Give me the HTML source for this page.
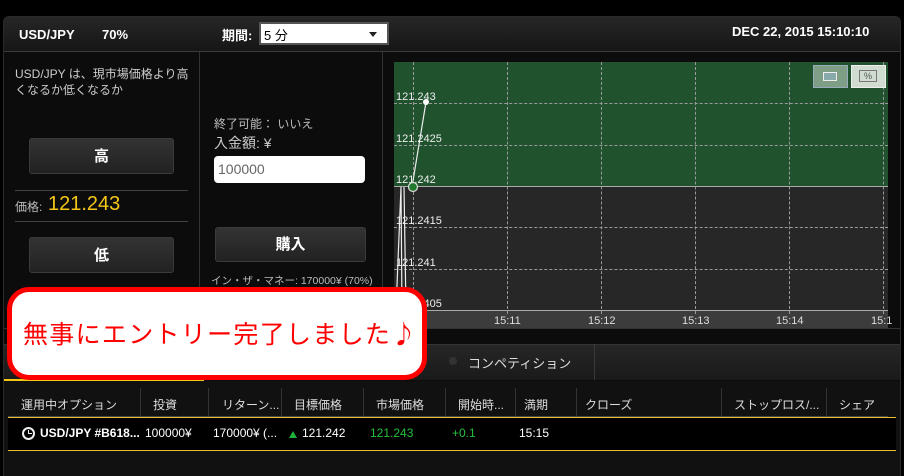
<!DOCTYPE html>
<html><head><meta charset="utf-8"><style>
*{margin:0;padding:0;box-sizing:border-box}
body{width:904px;height:476px;background:#000;position:relative;overflow:hidden;font-family:"Liberation Sans","Noto Sans CJK JP",sans-serif;color:#ddd}
.a{position:absolute}
.panel{left:3px;top:16px;width:898px;height:460px;background:#0c0c0c;border-radius:6px 6px 0 0;border:1px solid #2a2a2a}
.hdr{left:4px;top:17px;width:896px;height:35px;background:linear-gradient(#262626,#161616);border-bottom:1px solid #3a3a3a;border-radius:5px 5px 0 0}
.b{font-weight:bold;color:#fff;font-size:13px}
.btn{background:linear-gradient(#333,#222);border:1px solid #3a3a3a;border-radius:3px;color:#fff;font-weight:bold;font-size:15px;text-align:center}
.t{font-size:12px;color:#ddd}
.vl{width:1px;border-left:1px dashed #9a9a9a}
.hl{height:1px;border-top:1px dashed #9a9a9a}
.yl{font-size:11px;color:#eee}
</style></head><body>
<div class="a panel"></div>
<div class="a hdr"></div>
<div class="a b" style="left:19px;top:27px">USD/JPY</div>
<div class="a b" style="left:102px;top:27px">70%</div>
<div class="a b" style="left:222px;top:25px">期間:</div>
<div class="a" style="left:259px;top:22px;width:130px;height:23px;background:#fff;border:2px solid #555"></div>
<div class="a" style="left:264px;top:25px;font-size:13px;color:#000">5 分</div>
<div class="a" style="left:369px;top:32px;border-left:4px solid transparent;border-right:4px solid transparent;border-top:5px solid #222"></div>
<div class="a b" style="left:732px;top:24px">DEC 22, 2015 15:10:10</div>
<div class="a" style="left:199px;top:52px;width:1px;height:276px;background:#333"></div>
<div class="a" style="left:382px;top:52px;width:1px;height:276px;background:#333"></div>
<div class="a" style="left:4px;top:328px;width:896px;height:1px;background:#333"></div>
<div class="a t" style="left:15px;top:66px;line-height:16px;width:178px;font-size:12px;color:#ccc">USD/JPY は、現市場価格より高くなるか低くなるか</div>
<div class="a btn" style="left:29px;top:138px;width:145px;height:36px;line-height:35px">高</div>
<div class="a" style="left:15px;top:190px;width:173px;height:1px;background:#444"></div>
<div class="a t" style="left:15px;top:198px;color:#bbb">価格:</div>
<div class="a" style="left:48px;top:193px;font-size:20px;color:#f5c518">121.243</div>
<div class="a" style="left:15px;top:221px;width:173px;height:1px;background:#444"></div>
<div class="a btn" style="left:29px;top:237px;width:145px;height:36px;line-height:35px">低</div>
<div class="a t" style="left:214px;top:115px;color:#bbb">終了可能： いいえ</div>
<div class="a" style="left:214px;top:133px;font-size:14px;color:#ccc">入金額: ¥</div>
<div class="a" style="left:214px;top:156px;width:151px;height:27px;background:#fff;border-radius:4px;color:#666;font-size:14px;padding:5px 4px">100000</div>
<div class="a btn" style="left:215px;top:227px;width:151px;height:35px;line-height:34px">購入</div>
<div class="a" style="left:211px;top:273px;font-size:10.5px;color:#bbb">イン・ザ・マネー: 170000¥ (70%)</div>
<div class="a" style="left:394px;top:62px;width:494px;height:124px;background:#1f522d"></div>
<div class="a" style="left:394px;top:186px;width:494px;height:124px;background:#272727"></div>
<div class="a" style="left:394px;top:186px;width:494px;height:1px;background:#aaa"></div>
<div class="a" style="left:394px;top:310px;width:494px;height:18px;background:#3c3c3c;border-top:1px solid #aaa"></div>
<div class="a vl" style="left:413px;top:62px;height:248px"></div>
<div class="a vl" style="left:507px;top:62px;height:252px"></div>
<div class="a vl" style="left:601px;top:62px;height:252px"></div>
<div class="a vl" style="left:695px;top:62px;height:252px"></div>
<div class="a vl" style="left:789px;top:62px;height:252px"></div>
<div class="a vl" style="left:883px;top:62px;height:252px"></div>
<div class="a hl" style="left:394px;top:103px;width:494px"></div>
<div class="a hl" style="left:394px;top:145px;width:494px"></div>
<div class="a hl" style="left:394px;top:227px;width:494px"></div>
<div class="a hl" style="left:394px;top:269px;width:494px"></div>
<div class="a yl" style="left:396px;top:91px">121.243</div>
<div class="a yl" style="left:396px;top:133px">121.2425</div>
<div class="a yl" style="left:396px;top:174px">121.242</div>
<div class="a yl" style="left:396px;top:215px">121.2415</div>
<div class="a yl" style="left:396px;top:257px">121.241</div>
<div class="a yl" style="left:396px;top:298px">121.2405</div>
<svg class="a" style="left:394px;top:62px" width="40" height="250"><path d="M2 248 L7 125 L8 248 M10 125 L12 248 M18 125 L32 40" stroke="#eee" stroke-width="1.2" fill="none"/><circle cx="32" cy="40" r="3" fill="#fff"/><circle cx="19" cy="125" r="4.5" fill="#1f7a2d" stroke="#ddd" stroke-width="1.2"/></svg>
<div class="a" style="left:494px;top:315px;font-size:11px;color:#ddd">15:11</div>
<div class="a" style="left:588px;top:315px;font-size:11px;color:#ddd">15:12</div>
<div class="a" style="left:682px;top:315px;font-size:11px;color:#ddd">15:13</div>
<div class="a" style="left:776px;top:315px;font-size:11px;color:#ddd">15:14</div>
<div class="a" style="left:871px;top:315px;font-size:11px;color:#ddd">15:1</div>
<div class="a" style="left:813px;top:65px;width:35px;height:23px;background:#7f9e86;border:1px solid #9ab"></div>
<div class="a" style="left:823px;top:72px;width:14px;height:9px;border:1px solid #eee;background:#8aa"></div>
<div class="a" style="left:851px;top:65px;width:35px;height:23px;background:#cfdccf;border:1px solid #eee"></div>
<div class="a" style="left:859px;top:70px;width:18px;height:12px;border:1px solid #777;font-size:9px;color:#555;text-align:center;line-height:10px">%</div>
<div class="a" style="left:4px;top:344px;width:896px;height:36px;background:linear-gradient(#262626,#1a1a1a);border-top:1px solid #333"></div>
<div class="a" style="left:594px;top:344px;width:1px;height:36px;background:#3a3a3a"></div>
<div class="a" style="left:449px;top:357px;width:8px;height:8px;border-radius:50%;background:#333"></div>
<div class="a" style="left:468px;top:353px;font-size:13px;color:#ddd">コンペティション</div>
<div class="a" style="left:4px;top:379px;width:200px;height:2px;background:#f5c518"></div>
<div class="a" style="left:4px;top:381px;width:896px;height:95px;background:#111"></div>
<div class="a" style="left:8px;top:416px;width:880px;height:1px;background:#444"></div>
<div class="a t" style="left:21px;top:396px">運用中オプション</div>
<div class="a t" style="left:153px;top:396px">投資</div>
<div class="a t" style="left:222px;top:396px">リターン...</div>
<div class="a t" style="left:294px;top:396px">目標価格</div>
<div class="a t" style="left:376px;top:396px">市場価格</div>
<div class="a t" style="left:458px;top:396px">開始時...</div>
<div class="a t" style="left:524px;top:396px">満期</div>
<div class="a t" style="left:585px;top:396px">クローズ</div>
<div class="a t" style="left:734px;top:396px">ストップロス/...</div>
<div class="a t" style="left:839px;top:396px">シェア</div>
<div class="a" style="left:140px;top:388px;width:1px;height:28px;background:#333"></div>
<div class="a" style="left:208px;top:388px;width:1px;height:28px;background:#333"></div>
<div class="a" style="left:281px;top:388px;width:1px;height:28px;background:#333"></div>
<div class="a" style="left:363px;top:388px;width:1px;height:28px;background:#333"></div>
<div class="a" style="left:445px;top:388px;width:1px;height:28px;background:#333"></div>
<div class="a" style="left:515px;top:388px;width:1px;height:28px;background:#333"></div>
<div class="a" style="left:576px;top:388px;width:1px;height:28px;background:#333"></div>
<div class="a" style="left:721px;top:388px;width:1px;height:28px;background:#333"></div>
<div class="a" style="left:826px;top:388px;width:1px;height:28px;background:#333"></div>
<div class="a" style="left:8px;top:417px;width:888px;height:34px;background:#000;border-top:1px solid #e8c030;border-bottom:1px solid #e8c030"></div>
<div class="a" style="left:22px;top:427px;width:13px;height:13px;border:2px solid #eee;border-radius:50%"></div>
<div class="a" style="left:28px;top:430px;width:4px;height:4px;border-left:1.5px solid #eee;border-bottom:1.5px solid #eee"></div>
<div class="a b" style="left:40px;top:426px;font-size:12px">USD/JPY #B618...</div>
<div class="a t" style="left:145px;top:426px;color:#fff">100000¥</div>
<div class="a t" style="left:213px;top:426px;color:#fff">170000¥ (...</div>
<div class="a" style="left:289px;top:431px;border-left:4px solid transparent;border-right:4px solid transparent;border-bottom:7px solid #1db33a"></div>
<div class="a t" style="left:302px;top:426px;color:#fff">121.242</div>
<div class="a t" style="left:370px;top:426px;color:#22c03a">121.243</div>
<div class="a t" style="left:452px;top:426px;color:#22c03a">+0.1</div>
<div class="a t" style="left:519px;top:426px;color:#fff">15:15</div>
<div class="a" style="left:7px;top:287px;width:420px;height:93px;background:#fff;border:5px solid #f00;border-radius:22px"></div>
<div class="a" style="left:23px;top:315px;font-size:25px;color:#f00;letter-spacing:1.3px;font-family:'Noto Sans CJK JP',sans-serif;white-space:nowrap">無事にエントリー完了しました♪</div>
</body></html>
